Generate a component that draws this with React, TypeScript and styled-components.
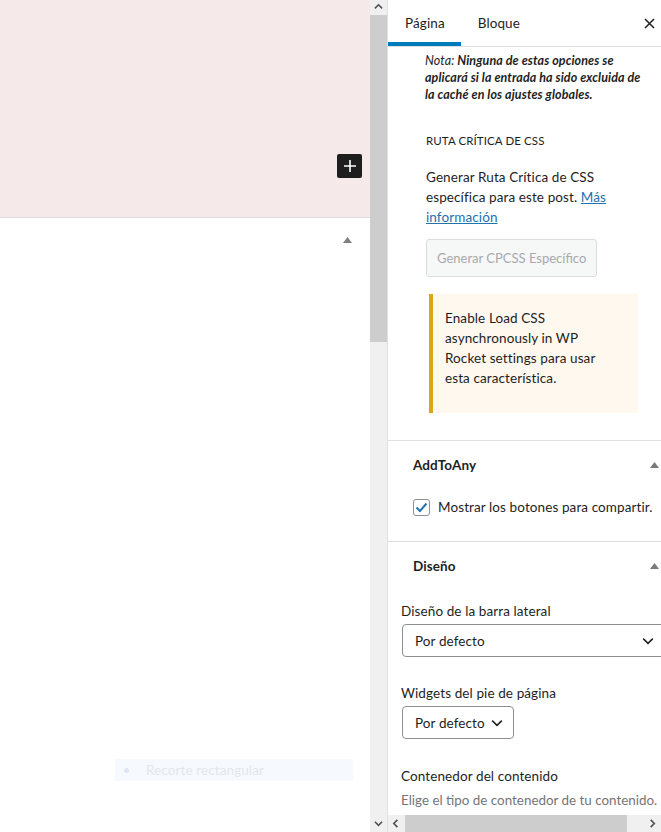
import * as React from 'react'
import styled, { createGlobalStyle } from 'styled-components'

const colors = {
  text: '#1e1e1e',
  border: '#e0e0e0',
  blue: '#007cba',
  link: '#2271b1',
  muted: '#757575',
  scrollTrack: '#f0f0f0',
  scrollThumb: '#cdcdcd',
  scrollArrow: '#606060',
}

const GlobalStyle = createGlobalStyle`
  html, body {
    margin: 0;
    padding: 0;
    background: #fff;
  }
  body {
    font-family: Lato, "Open Sans", "Noto Sans", sans-serif;
    color: ${colors.text};
    font-size: 13.5px;
    letter-spacing: 0.1px;
  }
  * {
    box-sizing: border-box;
  }
`

const Screen = styled.div`
  display: flex;
  width: 661px;
  height: 832px;
  overflow: hidden;
`

/* editor canvas */

const Canvas = styled.main`
  display: flex;
  flex-direction: column;
  flex-shrink: 0;
  width: 370px;
`

const CoverBlock = styled.div`
  display: flex;
  justify-content: flex-end;
  align-items: flex-start;
  height: 218px;
  padding: 154px 8px 0 0;
  background: #f5e9e9;
  border-bottom: 1px solid #dcdcdc;
`

const InserterButton = styled.button`
  display: flex;
  align-items: center;
  justify-content: center;
  width: 25px;
  height: 24px;
  padding: 0;
  border: 0;
  border-radius: 2px;
  background: ${colors.text};
  color: #fff;
`

const CanvasBody = styled.div`
  display: flex;
  flex-direction: column;
  flex: 1;
`

const MetaToggleRow = styled.div`
  display: flex;
  justify-content: flex-end;
  padding: 19px 18px 0 0;
`

const GhostItem = styled.div`
  display: flex;
  align-items: center;
  gap: 17px;
  width: 238px;
  height: 22px;
  margin: auto 0 51px 115px;
  padding-left: 9px;
  background: #f6faff;
  color: #e2e6ec;
  font-size: 13.5px;
`

const GhostDot = styled.span`
  width: 5px;
  height: 5px;
  border-radius: 50%;
  background: #dde6f3;
`

/* scrollbars */

const VScroll = styled.div`
  display: flex;
  flex-direction: column;
  flex-shrink: 0;
  width: 17px;
  background: ${colors.scrollTrack};
`

const ScrollButton = styled.div<{ $w: number; $h: number }>`
  display: flex;
  align-items: center;
  justify-content: center;
  flex-shrink: 0;
  width: ${(p) => p.$w}px;
  height: ${(p) => p.$h}px;
`

const VThumb = styled.div`
  height: 327px;
  background: ${colors.scrollThumb};
`

const ScrollSpacer = styled.div`
  flex: 1;
`

const HScroll = styled.div`
  display: flex;
  flex-shrink: 0;
  height: 17px;
  background: ${colors.scrollTrack};
`

const HThumb = styled.div`
  width: 222px;
  background: ${colors.scrollThumb};
`

/* sidebar */

const Sidebar = styled.aside`
  display: flex;
  flex-direction: column;
  flex: 1;
  min-width: 0;
  border-left: 1px solid ${colors.border};
`

const SidebarHeader = styled.div`
  display: flex;
  align-items: stretch;
  flex-shrink: 0;
  height: 47px;
  border-bottom: 1px solid ${colors.border};
`

const Tab = styled.div<{ $active?: boolean }>`
  display: flex;
  align-items: center;
  padding: 0 16px 0 17px;
  font-size: 13.5px;
  box-shadow: ${(p) => (p.$active ? `inset 0 -4px 0 ${colors.blue}` : 'none')};
`

const CloseButton = styled.div`
  display: flex;
  align-items: center;
  justify-content: center;
  width: 24px;
  margin-left: auto;
`

const SidebarScroll = styled.div`
  flex: 1;
  overflow: hidden;
`

const SidebarInner = styled.div`
  width: 287px;
`

const RocketSection = styled.section`
  padding: 5px 12px 27px 37px;
  border-bottom: 1px solid ${colors.border};
`

const Note = styled.p`
  margin: 0;
  font-size: 12.5px;
  line-height: 17px;
  font-style: italic;
  font-weight: 700;
  letter-spacing: 0.1px;
  white-space: nowrap;

  span {
    font-weight: 400;
  }
`

const SectionTitle = styled.h3`
  margin: 30px 0 0 1px;
  font-size: 11.5px;
  line-height: 16px;
  font-weight: 400;
  text-transform: uppercase;
`

const Paragraph = styled.p`
  margin: 18px 0 0 1px;
  font-size: 13.5px;
  line-height: 20px;
  white-space: nowrap;

  a {
    color: ${colors.link};
    text-decoration: underline;
  }
`

const DisabledButton = styled.button`
  display: block;
  height: 38px;
  margin: 12px 0 0 1px;
  padding: 0 10px;
  border: 1px solid #dcdcde;
  border-radius: 3px;
  background: #f6f7f7;
  color: #a7aaad;
  font-family: inherit;
  font-size: 13px;
  letter-spacing: 0;
`

const Notice = styled.div`
  width: 209px;
  margin: 17px 0 0 4px;
  padding: 14px 12px 25px 12px;
  border-left: 4px solid #dba617;
  background: #fef8ee;
  font-size: 13.5px;
  line-height: 20px;
  white-space: nowrap;
`

const Panel = styled.section`
  border-bottom: 1px solid ${colors.border};
`

const PanelHeader = styled.div`
  display: flex;
  align-items: center;
  justify-content: space-between;
  height: 48px;
  padding: 0 16px 0 25px;
  font-size: 13.5px;
  font-weight: 700;
`

const PanelBody = styled.div<{ $pad: string }>`
  padding: ${(p) => p.$pad};
`

const CheckRow = styled.label`
  display: flex;
  align-items: center;
  gap: 8px;
  height: 18px;
  font-size: 13.5px;
  white-space: nowrap;
`

const CheckBox = styled.span`
  display: flex;
  align-items: center;
  justify-content: center;
  width: 17px;
  height: 17px;
  border: 1px solid #8c8f94;
  border-radius: 3px;
  background: #fff;
`

const FieldLabel = styled.div<{ $gap: number }>`
  margin-top: ${(p) => p.$gap}px;
  font-size: 13.5px;
  line-height: 18px;
  white-space: nowrap;
`

const Select = styled.div<{ $full?: boolean }>`
  display: ${(p) => (p.$full ? 'flex' : 'inline-flex')};
  align-items: center;
  justify-content: space-between;
  gap: 6px;
  width: ${(p) => (p.$full ? '263px' : 'auto')};
  height: 33px;
  margin: 4px 0 0 1px;
  padding: 0 10px 0 12px;
  border: 1px solid #8c8f94;
  border-radius: 4px;
  font-size: 13.5px;
`

const FieldWrap = styled.div`
  display: flex;
`

const HelpText = styled.div`
  margin-top: 6px;
  color: ${colors.muted};
  font-size: 13.4px;
  letter-spacing: 0;
  line-height: 18px;
  white-space: nowrap;
`

const Triangle = ({ color = '#7a7a7a' }: { color?: string }) => (
  <svg width="9" height="6" viewBox="0 0 9 6">
    <path d="M0 6 L4.5 0 L9 6 Z" fill={color} />
  </svg>
)

type ChevronProps = {
  dir: 'up' | 'down' | 'left' | 'right'
  size?: number
  stroke?: string
  width?: number
}

const Chevron = ({ dir, size = 8, stroke = colors.scrollArrow, width = 1.5 }: ChevronProps) => {
  const d = {
    up: 'M1 6 L5 2 L9 6',
    down: 'M1 3 L5 7 L9 3',
    left: 'M6 1 L2 5 L6 9',
    right: 'M3 1 L7 5 L3 9',
  }[dir]
  return (
    <svg width={size} height={size} viewBox="0 0 10 10">
      <path d={d} fill="none" stroke={stroke} strokeWidth={width * (10 / size)} />
    </svg>
  )
}

const App: React.FC = () => (
  <>
    <GlobalStyle />
    <Screen>
      <Canvas>
        <CoverBlock>
          <InserterButton aria-label="Añadir bloque">
            <svg width="14" height="14" viewBox="0 0 14 14">
              <path d="M7 1 V13 M1 7 H13" stroke="#fff" strokeWidth="1.6" />
            </svg>
          </InserterButton>
        </CoverBlock>
        <CanvasBody>
          <MetaToggleRow>
            <Triangle color="#808080" />
          </MetaToggleRow>
          <GhostItem>
            <GhostDot />
            Recorte rectangular
          </GhostItem>
        </CanvasBody>
      </Canvas>

      <VScroll>
        <ScrollButton $w={17} $h={15}>
          <Chevron dir="up" size={9} stroke="#505050" width={1.6} />
        </ScrollButton>
        <VThumb />
        <ScrollSpacer />
        <ScrollButton $w={17} $h={17}>
          <Chevron dir="down" size={9} stroke="#505050" width={1.6} />
        </ScrollButton>
      </VScroll>

      <Sidebar>
        <SidebarHeader>
          <Tab $active>Página</Tab>
          <Tab>Bloque</Tab>
          <CloseButton aria-label="Cerrar">
            <svg width="11" height="11" viewBox="0 0 11 11">
              <path d="M1 1 L10 10 M10 1 L1 10" stroke={colors.text} strokeWidth="1.5" />
            </svg>
          </CloseButton>
        </SidebarHeader>

        <SidebarScroll>
          <SidebarInner>
            <RocketSection>
              <Note>
                <span>Nota:</span> Ninguna de estas opciones se
                <br />
                aplicará si la entrada ha sido excluida de
                <br />
                la caché en los ajustes globales.
              </Note>
              <SectionTitle>Ruta crítica de CSS</SectionTitle>
              <Paragraph>
                Generar Ruta Crítica de CSS
                <br />
                específica para este post. <a href="#">Más</a>
                <br />
                <a href="#">información</a>
              </Paragraph>
              <DisabledButton disabled>Generar CPCSS Específico</DisabledButton>
              <Notice>
                Enable Load CSS
                <br />
                asynchronously in WP
                <br />
                Rocket settings para usar
                <br />
                esta característica.
              </Notice>
            </RocketSection>

            <Panel>
              <PanelHeader>
                AddToAny
                <Triangle />
              </PanelHeader>
              <PanelBody $pad="9px 16px 25px 25px">
                <CheckRow>
                  <CheckBox>
                    <svg width="13" height="11" viewBox="0 0 13 11">
                      <path d="M1.5 5.5 L5 9 L11.5 1.5" fill="none" stroke={colors.link} strokeWidth="2" />
                    </svg>
                  </CheckBox>
                  Mostrar los botones para compartir.
                </CheckRow>
              </PanelBody>
            </Panel>

            <Panel>
              <PanelHeader>
                Diseño
                <Triangle />
              </PanelHeader>
              <PanelBody $pad="0 0 40px 13px">
                <FieldLabel $gap={12}>Diseño de la barra lateral</FieldLabel>
                <Select $full>
                  Por defecto
                  <Chevron dir="down" size={12} stroke={colors.text} width={1.5} />
                </Select>
                <FieldLabel $gap={27}>Widgets del pie de página</FieldLabel>
                <FieldWrap>
                  <Select>
                    Por defecto
                    <Chevron dir="down" size={12} stroke={colors.text} width={1.5} />
                  </Select>
                </FieldWrap>
                <FieldLabel $gap={28}>Contenedor del contenido</FieldLabel>
                <HelpText>Elige el tipo de contenedor de tu contenido.</HelpText>
              </PanelBody>
            </Panel>
          </SidebarInner>
        </SidebarScroll>

        <HScroll>
          <ScrollButton $w={17} $h={17}>
            <Chevron dir="left" size={9} stroke="#505050" width={1.6} />
          </ScrollButton>
          <HThumb />
          <ScrollSpacer />
          <ScrollButton $w={17} $h={17}>
            <Chevron dir="right" size={9} stroke="#505050" width={1.6} />
          </ScrollButton>
        </HScroll>
      </Sidebar>
    </Screen>
  </>
)

export default App
